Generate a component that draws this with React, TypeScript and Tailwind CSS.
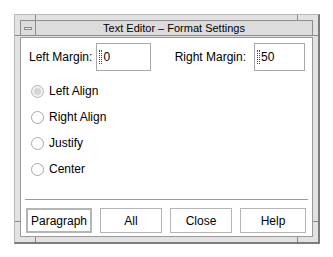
import React from "react";

const font = { fontFamily: '"Liberation Sans", Arial, sans-serif' };

function Radio({ label, selected }: { label: string; selected?: boolean }) {
  return (
    <div className="flex h-[26px] items-center gap-[5px] pl-[10px]">
      <span
        className={`flex h-[13px] w-[13px] items-center justify-center rounded-full border ${
          selected ? "border-[#b8b8b8] bg-[#f0f0f0]" : "border-[#a8a8a8] bg-white"
        }`}
      >
        {selected && <span className="h-[7px] w-[7px] rounded-full bg-[#d4d4d4]" />}
      </span>
      <span className="text-[12px] text-black">{label}</span>
    </div>
  );
}

function Field({ value }: { value: string }) {
  return (
    <div className="relative flex h-[28px] items-center border border-[#a8a8a8] bg-white pl-[6px] text-[12px] text-black">
      <span className="absolute left-[2px] top-[6px] h-[14px] w-[3px] border-x border-dotted border-black opacity-70" />
      <span>{value}</span>
    </div>
  );
}

function Btn({ label, def, w }: { label: string; def?: boolean; w: string }) {
  return (
    <button
      className={`flex h-[25px] items-center justify-center bg-white text-[12px] text-black ${w} ${
        def ? "border-2 border-[#b4b4b4]" : "border border-[#b4b4b4]"
      }`}
    >
      {label}
    </button>
  );
}

export default function App() {
  return (
    <div className="h-[257px] w-[333px] bg-white pl-[14px] pt-[14px]" style={font}>
      <div className="relative flex h-[230px] w-[306px] flex-col border-l border-t border-[#b8b8b8] border-b-2 border-r-2 border-b-[#7c7c7c] border-r-[#7c7c7c] bg-[#e2e2e2] p-[5px]">
        {/* resize handle ticks */}
        <span className="absolute left-[20px] top-0 h-[5px] w-px bg-[#8a8a8a]" />
        <span className="absolute right-[20px] top-0 h-[5px] w-px bg-[#8a8a8a]" />
        <span className="absolute bottom-0 left-[20px] h-[5px] w-px bg-[#8a8a8a]" />
        <span className="absolute bottom-0 right-[20px] h-[5px] w-px bg-[#8a8a8a]" />
        <span className="absolute left-0 top-[20px] h-px w-[5px] bg-[#8a8a8a]" />
        <span className="absolute right-0 top-[20px] h-px w-[5px] bg-[#8a8a8a]" />
        <span className="absolute bottom-[20px] left-0 h-px w-[5px] bg-[#8a8a8a]" />
        <span className="absolute bottom-[20px] right-0 h-px w-[5px] bg-[#8a8a8a]" />

        <div className="flex h-[16px] border border-[#8c8c8c] bg-[#dcdcdc]">
          <div className="flex w-[15px] items-center justify-center border-r border-[#8c8c8c]">
            <span className="h-[3px] w-[8px] border border-[#8c8c8c] bg-[#eeeeee]" />
          </div>
          <div className="flex flex-1 items-center justify-center text-[11px] leading-none text-black">
            Text Editor – Format Settings
          </div>
        </div>

        <div className="mt-[1px] flex flex-1 flex-col border border-[#9a9a9a] bg-white">
          <div className="flex items-center pl-[8px] pr-[7px] pt-[5px]">
            <span className="text-[12px] text-black">Left Margin:</span>
            <div className="ml-[4px] w-[55px]">
              <Field value="0" />
            </div>
            <span className="ml-auto text-[12px] text-black">Right Margin:</span>
            <div className="ml-[8px] w-[51px]">
              <Field value="50" />
            </div>
          </div>

          <div className="mt-[7px] flex flex-col">
            <Radio label="Left Align" selected />
            <Radio label="Right Align" />
            <Radio label="Justify" />
            <Radio label="Center" />
          </div>

          <div className="mx-[4px] mt-[17px] h-[2px] border-t border-[#9a9a9a] border-b border-b-white" />

          <div className="mt-[7px] flex gap-[8px] pl-[5px] pr-[6px]">
            <Btn label="Paragraph" def w="w-[67px]" />
            <Btn label="All" w="w-[63px]" />
            <Btn label="Close" w="w-[63px]" />
            <Btn label="Help" w="w-[67px]" />
          </div>
        </div>
      </div>
    </div>
  );
}
